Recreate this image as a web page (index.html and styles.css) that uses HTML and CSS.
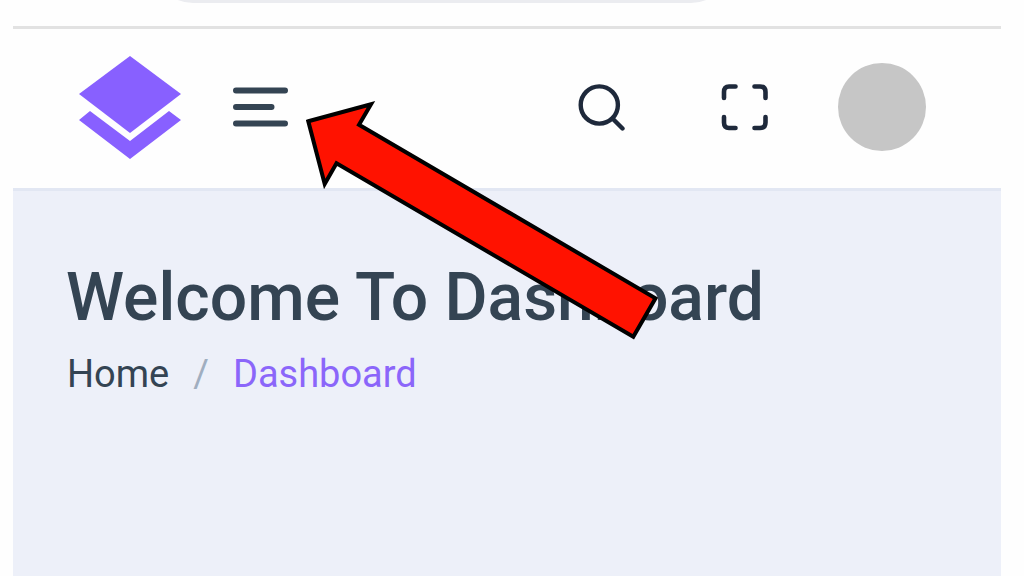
FILE: index.html
```html
<!DOCTYPE html>
<html lang="en">
<head>
    <meta charset="UTF-8">
    <meta name="viewport" content="width=device-width, initial-scale=1.0">
    <title>Dashboard</title>
    <link rel="stylesheet" href="styles.css">
</head>
<body>
    <div class="page">
        <div class="browser-bar">
            <div class="address"></div>
        </div>

        <header class="header">
            <a href="#" class="logo" aria-label="Home page">
                <svg width="102" height="104" viewBox="0 0 102 104" fill="#8860ff">
                    <path d="M51 1 L102 39 L51 78 L0 39 Z"/>
                    <path d="M0 65 L11 56 L51 86 L90 56 L102 65 L51 104 Z"/>
                </svg>
            </a>
            <button class="icon-button" aria-label="Toggle menu">
                <svg width="56" height="40" viewBox="0 0 56 40" stroke="#344453" stroke-width="6" stroke-linecap="round">
                    <path d="M3 3.5 H52 M3 20 H38.5 M3 36.5 H52"/>
                </svg>
            </button>

            <div class="actions">
                <button class="icon-button" aria-label="Search">
                    <svg width="47" height="47" viewBox="0 0 47 47" fill="none" stroke="#1e293b" stroke-width="4.4" stroke-linecap="round">
                        <circle cx="21.3" cy="21" r="18.6"/>
                        <path d="M35 35 L44.5 44.5"/>
                    </svg>
                </button>
                <button class="icon-button" aria-label="Full screen">
                    <svg width="47" height="47" viewBox="0 0 47 47" fill="none" stroke="#1e293b" stroke-width="4.6" stroke-linecap="round">
                        <path d="M3 14 V8 Q3 2.5 8 2.5 H14.5"/>
                        <path d="M33.5 2.5 H39 Q44.5 2.5 44.5 8 V14"/>
                        <path d="M44.5 33 V38.5 Q44.5 44 39 44 H33.5"/>
                        <path d="M14.5 44 H8 Q3 44 3 38.5 V33"/>
                    </svg>
                </button>
                <button class="avatar" aria-label="Profile"></button>
            </div>
        </header>

        <main class="content">
            <h1 class="title">Welcome To Dashboard</h1>
            <nav class="breadcrumb">
                <a href="#">Home</a>
                <span class="slash">/</span>
                <a href="#" class="active">Dashboard</a>
            </nav>
        </main>
    </div>

    <!-- pointer to the menu button -->
    <svg class="arrow" width="354" height="240" viewBox="0 0 354 240" fill="#ff1200" stroke="#000" stroke-width="4">
        <path d="M4.3 21.3 L67 4.3 L55 24.7 L351.5 198.3 L329.3 236.7 L32.5 63.3 L20.7 84 Z"/>
    </svg>
</body>
</html>
```
FILE: styles.css
```css
body{
    margin: 0;
    background-color: #fefefe;
    font-family: Roboto, sans-serif;
    color: #344453;
}
a{
    color: inherit;
    text-decoration: none;
}
button{
    border: none;
    padding: 0;
    cursor: pointer;
}
svg{
    display: block;
}
.page{
    display: flex;
    flex-direction: column;
    min-height: 100vh;
    margin: 0 23px 0 13px;
}
.browser-bar{
    display: flex;
    align-items: flex-end;
    height: 3px;
    padding: 0 270px 23px 140px;
    border-bottom: 3px solid #e2e2e2;
    overflow: hidden;
}
.address{
    flex: 1;
    height: 80px;
    border-radius: 40px;
    background-color: #ebecf0;
}
.header{
    display: flex;
    align-items: center;
    padding: 26px 75px 29px 66px;
    border-bottom: 3px solid #e2e7f3;
}
.logo{
    margin-right: 52px;
}
.icon-button{
    background-color: transparent;
}
.actions{
    display: flex;
    align-items: center;
    margin-left: auto;
}
.actions .icon-button{
    margin-right: 96px;
}
.actions .icon-button + .icon-button{
    margin-right: 70px;
}
.avatar{
    width: 88px;
    height: 88px;
    border-radius: 50%;
    background-color: #c6c6c6;
}
.content{
    flex: 1;
    padding: 67px 53px 0;
    background-color: #edf0f9;
}
.title{
    margin: 0;
    font-size: 66px;
    line-height: 80px;
    font-weight: 500;
}
.breadcrumb{
    display: flex;
    gap: 24px;
    margin-top: 12px;
    padding-left: 1px;
    font-size: 38px;
    line-height: 48px;
}
.slash{
    color: #a0aec0;
}
.active{
    color: #8b66fa;
}
.arrow{
    position: absolute;
    left: 304px;
    top: 100px;
}
```
